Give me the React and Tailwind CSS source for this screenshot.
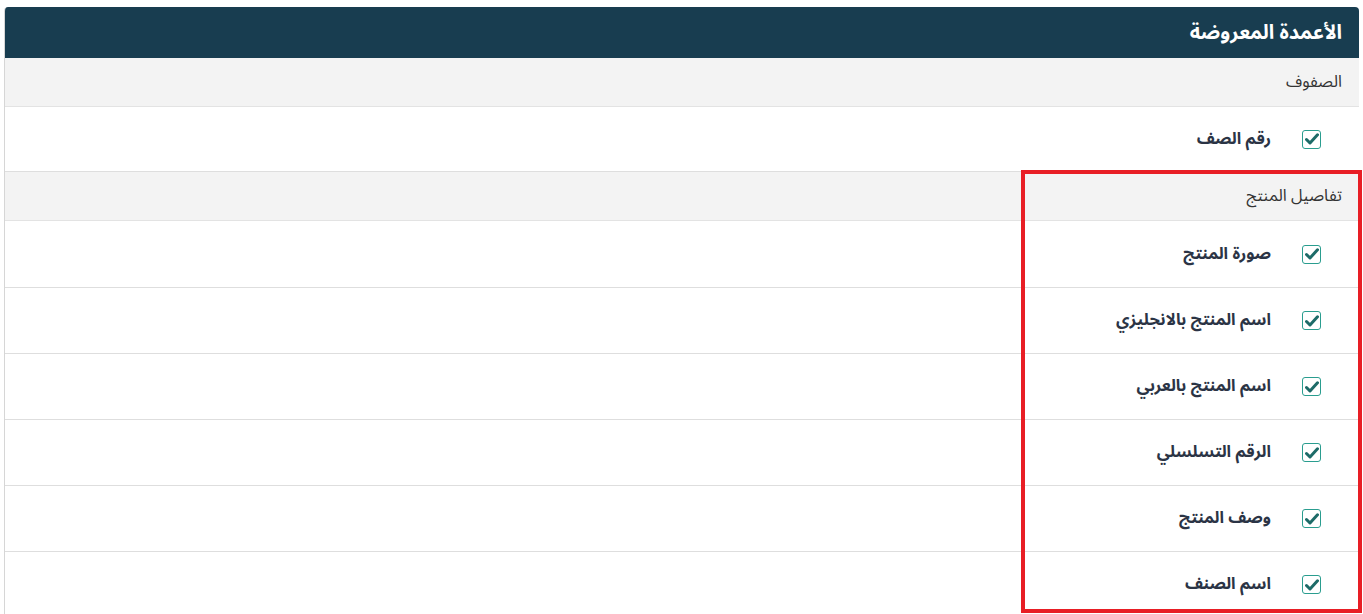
import React from "react";

function Check() {
  return (
    <span className="flex h-[19px] w-[19px] items-center justify-center rounded-[3px] border-[1.5px] border-[#2a9d8f] bg-white">
      <svg width="14" height="12" viewBox="0 0 14 12">
        <path d="M1.5 6.5 L5 10 L12.5 1.8" fill="none" stroke="#1d6b68" strokeWidth="3" strokeLinecap="round" strokeLinejoin="round" />
      </svg>
    </span>
  );
}

function Section({ title }) {
  return (
    <div className="flex h-[49px] items-center border-b border-[#e3e3e3] bg-[#f3f3f3] pr-[17px] text-[16.5px] text-[#333]">
      {title}
    </div>
  );
}

function Item({ label, h = "h-[66px]" }) {
  return (
    <div className={"flex items-center gap-[31px] border-b border-[#dedede] bg-white pr-[38px] " + h}>
      <Check />
      <span className="text-[16.5px] font-bold text-[#2b3445]">{label}</span>
    </div>
  );
}

export default function App() {
  const items = [
    "صورة المنتج",
    "اسم المنتج بالانجليزي",
    "اسم المنتج بالعربي",
    "الرقم التسلسلي",
    "وصف المنتج",
    "اسم الصنف",
  ];
  return (
    <div
      dir="rtl"
      className="relative h-[614px] w-[1363px] overflow-hidden bg-white px-[4px] pt-[7px]"
      style={{ fontFamily: '"Noto Sans Arabic", "DejaVu Sans", sans-serif' }}
    >
      <div className="overflow-hidden rounded-t-[4px] border-l border-[#d6d6d6]">
        <div className="flex h-[51px] items-center bg-[#183d50] pr-[17px] text-[20px] font-bold text-white">
          الأعمدة المعروضة
        </div>
        <Section title="الصفوف" />
        <div className="flex h-[65px] items-center gap-[31px] border-b border-[#dedede] bg-white pr-[38px]">
          <Check />
          <span className="text-[16.5px] font-bold text-[#2b3445]">رقم الصف</span>
        </div>
        <Section title="تفاصيل المنتج" />
        {items.map((t, i) => (
          <Item key={t} label={t} h={i === 0 ? "h-[67px]" : "h-[66px]"} />
        ))}
      </div>
      <div className="pointer-events-none absolute left-[1021px] top-[170px] h-[443px] w-[341px] border-[4px] border-[#e81e25]" />
    </div>
  );
}
